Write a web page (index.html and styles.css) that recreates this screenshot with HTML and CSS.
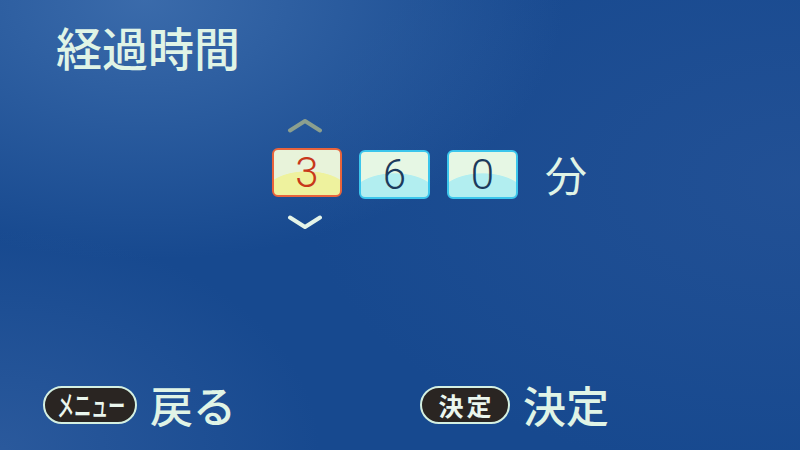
FILE: index.html
```html
<!DOCTYPE html>
<html lang="ja">
<head>
<meta charset="utf-8">
<title>経過時間</title>
<link rel="stylesheet" href="styles.css">
</head>
<body>
<div class="screen">
  <h1 class="title">経過時間</h1>
  <div class="picker">
    <div class="digit-col">
      <svg class="chev chev-up" width="36" height="15" viewBox="0 0 36 15"><path d="M3 12.5 L18 3 L33 12.5" fill="none" stroke-width="4" stroke-linecap="round" stroke-linejoin="round"/></svg>
      <div class="digit digit-active">3</div>
      <svg class="chev chev-down" width="36" height="15" viewBox="0 0 36 15"><path d="M3 2.5 L18 12 L33 2.5" fill="none" stroke-width="4" stroke-linecap="round" stroke-linejoin="round"/></svg>
    </div>
    <div class="digit">6</div>
    <div class="digit">0</div>
    <span class="unit">分</span>
  </div>
  <div class="footer">
    <div class="action">
      <span class="pill pill-menu"><svg class="pill-menu-text" width="68" height="34" viewBox="0 0 114 34" preserveAspectRatio="none"><text x="0" y="29">メニュー</text></svg></span>
      <span class="action-label">戻る</span>
    </div>
    <div class="action">
      <span class="pill pill-ok">決定</span>
      <span class="action-label">決定</span>
    </div>
  </div>
</div>
</body>
</html>
```
FILE: styles.css
```css
html, body {
  margin: 0;
  padding: 0;
}
body {
  width: 800px;
  height: 450px;
  overflow: hidden;
  font-family: "Noto Sans CJK JP", "Noto Sans", sans-serif;
}
.screen {
  width: 800px;
  height: 450px;
  display: flex;
  flex-direction: column;
  color: #e0f4e6;
  background:
    radial-gradient(ellipse 420px 260px at 18% 0%, rgba(70, 118, 180, 0.75), rgba(70, 118, 180, 0) 100%),
    radial-gradient(ellipse 320px 220px at 0% 100%, rgba(55, 100, 165, 0.6), rgba(55, 100, 165, 0) 100%),
    radial-gradient(ellipse 500px 300px at 100% 40%, rgba(45, 88, 155, 0.5), rgba(45, 88, 155, 0) 100%),
    #17498f;
}
.title {
  margin: 0;
  padding: 23px 0 0 56px;
  font-size: 46px;
  line-height: 46px;
  font-weight: 500;
}
.picker {
  display: flex;
  align-items: center;
  margin-top: 49px;
  padding-left: 272px;
}
.digit-col {
  display: flex;
  flex-direction: column;
  align-items: center;
}
.chev {
  display: block;
}
.chev-up {
  stroke: #8c9f8e;
  margin-bottom: 15px;
  margin-left: -4px;
}
.chev-down {
  stroke: #e4f4e8;
  margin-top: 18px;
  margin-left: -4px;
}
.digit {
  box-sizing: border-box;
  width: 71px;
  height: 49px;
  border: 2px solid #3cc6ec;
  border-radius: 6px;
  background:
    radial-gradient(44px 24px at 50% 100%, #b2eef0 97%, rgba(178, 238, 240, 0) 100%),
    #e6f7e4;
  color: #1c3a5c;
  font-family: Roboto, "Liberation Sans", Arial, sans-serif;
  font-weight: 300;
  font-size: 42px;
  line-height: 45px;
  text-align: center;
  margin-left: 17px;
}
.digit-col .digit {
  margin-left: 0;
}
.digit-active {
  width: 70px;
  border-color: #e8643c;
  background:
    radial-gradient(44px 24px at 50% 100%, #eef29e 97%, rgba(238, 242, 158, 0) 100%),
    #e8f3da;
  color: #c8381a;
}
.unit {
  margin-left: 27px;
  font-size: 42px;
  line-height: 42px;
  color: #e0f4e6;
}
.footer {
  margin-top: auto;
  margin-bottom: 24px;
  padding-left: 43px;
  display: grid;
  grid-template-columns: 377px auto;
  align-items: center;
}
.action {
  display: flex;
  align-items: center;
}
.pill {
  box-sizing: border-box;
  flex-shrink: 0;
  height: 38px;
  display: inline-flex;
  align-items: center;
  justify-content: center;
  border: 2px solid #d4f0e2;
  border-radius: 19px;
  background: #2a2522;
  color: #eaf6ee;
  white-space: nowrap;
}
.pill-menu {
  width: 94px;
}
.pill-menu-text {
  display: block;
  margin-left: 2px;
  overflow: visible;
}
.pill-menu-text text {
  fill: #eaf6ee;
  font-family: "Noto Sans CJK JP", sans-serif;
  font-size: 29px;
  font-weight: 500;
  letter-spacing: -0.5px;
}
.pill-ok {
  width: 90px;
  font-size: 25px;
  line-height: 26px;
  font-weight: 700;
  letter-spacing: 3px;
  padding-left: 3px;
}
.action-label {
  margin-left: 13px;
  font-size: 43px;
  line-height: 43px;
  font-weight: 500;
  white-space: nowrap;
}
```
